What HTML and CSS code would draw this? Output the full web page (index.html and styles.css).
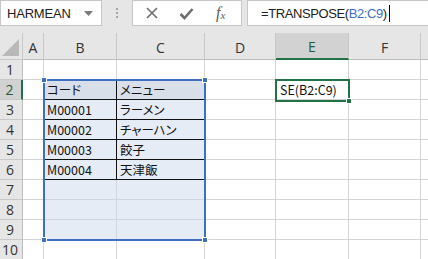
FILE: index.html
```html
<!DOCTYPE html>
<html>
<head>
<meta charset="utf-8">
<link rel="stylesheet" href="styles.css">
</head>
<body>
<div class="app">
  <div class="toolbar">
    <div class="namebox">
      <span class="name">HARMEAN</span>
      <svg class="caret" width="9" height="5" viewBox="0 0 9 5"><path d="M0 0 H9 L4.5 5 Z" fill="#7a7a7a"/></svg>
    </div>
    <div class="dots"><i></i><i></i><i></i></div>
    <div class="fbuttons">
      <svg class="btn" width="14" height="14" viewBox="0 0 14 14"><path d="M2 2 L12 12 M12 2 L2 12" stroke="#6e6e6e" stroke-width="1.6"/></svg>
      <svg class="btn" width="15" height="13" viewBox="0 0 15 13"><path d="M1.5 7 L5.5 11 L13.5 2" stroke="#6e6e6e" stroke-width="2.6" fill="none"/></svg>
      <span class="fx">f<sub>x</sub></span>
    </div>
    <div class="formula"><span>=TRANSPOSE(</span><span class="ref">B2:C9</span><span>)</span><span class="cursor"></span></div>
  </div>
  <div class="sheet">
    <div class="grid">
      <div class="corner"><svg width="17" height="17" viewBox="0 0 17 17"><path d="M17 0 V17 H0 Z" fill="#b9b9b9"/></svg></div>
      <div class="ch">A</div><div class="ch">B</div><div class="ch">C</div><div class="ch">D</div><div class="ch sel">E</div><div class="ch">F</div><div class="ch"></div>

      <div class="rh">1</div><div class="c"></div><div class="c"></div><div class="c"></div><div class="c"></div><div class="c"></div><div class="c"></div><div class="c"></div>

      <div class="rh sel">2</div><div class="c"></div><div class="c hd tb vb">コード</div><div class="c hd tb">メニュー</div><div class="c"></div><div class="c active">SE(B2:C9)</div><div class="c"></div><div class="c"></div>

      <div class="rh">3</div><div class="c"></div><div class="c rg tb vb">M00001</div><div class="c rg tb">ラーメン</div><div class="c"></div><div class="c"></div><div class="c"></div><div class="c"></div>

      <div class="rh">4</div><div class="c"></div><div class="c rg tb vb">M00002</div><div class="c rg tb">チャーハン</div><div class="c"></div><div class="c"></div><div class="c"></div><div class="c"></div>

      <div class="rh">5</div><div class="c"></div><div class="c rg tb vb">M00003</div><div class="c rg tb">餃子</div><div class="c"></div><div class="c"></div><div class="c"></div><div class="c"></div>

      <div class="rh">6</div><div class="c"></div><div class="c rg tb vb">M00004</div><div class="c rg tb">天津飯</div><div class="c"></div><div class="c"></div><div class="c"></div><div class="c"></div>

      <div class="rh">7</div><div class="c"></div><div class="c rg"></div><div class="c rg"></div><div class="c"></div><div class="c"></div><div class="c"></div><div class="c"></div>

      <div class="rh">8</div><div class="c"></div><div class="c rg"></div><div class="c rg"></div><div class="c"></div><div class="c"></div><div class="c"></div><div class="c"></div>

      <div class="rh">9</div><div class="c"></div><div class="c rg"></div><div class="c rg"></div><div class="c"></div><div class="c"></div><div class="c"></div><div class="c"></div>

      <div class="rh">10</div><div class="c"></div><div class="c"></div><div class="c"></div><div class="c"></div><div class="c"></div><div class="c"></div><div class="c"></div>
    </div>
    <div class="refbox">
      <span class="h tl"></span><span class="h tr"></span><span class="h bl"></span><span class="h br"></span>
    </div>
    <div class="activebox"><span class="fill"></span></div>
  </div>
</div>
</body>
</html>
```
FILE: styles.css
```css
* { box-sizing: border-box; }
html, body { margin: 0; padding: 0; }
body {
  width: 428px;
  height: 259px;
  overflow: hidden;
  background: #e6e6e6;
  font-family: "Noto Sans CJK JP", "Liberation Sans", sans-serif;
}
.app { width: 428px; }

.toolbar {
  height: 33px;
  display: flex;
  align-items: flex-start;
  background: #e6e6e6;
}
.namebox {
  width: 102px;
  height: 26px;
  background: #fff;
  border: 1px solid #c6c6c6;
  display: flex;
  align-items: center;
  justify-content: space-between;
  padding: 0 8px 0 6px;
}
.name {
  font-family: "Liberation Sans", sans-serif;
  font-size: 13px;
  color: #222;
  letter-spacing: -0.2px;
}
.caret { margin-top: 1px; }
.dots {
  width: 30px;
  height: 26px;
  display: flex;
  flex-direction: column;
  align-items: center;
  justify-content: center;
  gap: 2px;
}
.dots i {
  display: block;
  width: 2px;
  height: 2px;
  background: #a6a6a6;
}
.fbuttons {
  width: 110px;
  height: 26px;
  background: #fff;
  border: 1px solid #c6c6c6;
  display: flex;
  align-items: center;
  padding-left: 12px;
  gap: 0;
}
.fbuttons .btn:first-child { margin-right: 20px; }
.fbuttons .btn:nth-child(2) { margin-right: 22px; }
.fx {
  font-family: "Liberation Serif", serif;
  font-style: italic;
  font-size: 16px;
  color: #5e5e5e;
  line-height: 1;
}
.fx sub { font-size: 11px; vertical-align: -1px; margin-left: 0; }
.formula {
  flex: 1;
  margin-left: 5px;
  height: 26px;
  background: #fff;
  border: 1px solid #c6c6c6;
  border-right: none;
  display: flex;
  align-items: center;
  padding-left: 13px;
  font-family: "Liberation Sans", sans-serif;
  font-size: 13px;
  letter-spacing: -0.4px;
  color: #222;
}
.formula .ref { color: #3c6fc4; }
.cursor {
  display: inline-block;
  width: 1px;
  height: 17px;
  background: #000;
  margin-left: 2px;
}

.sheet {
  position: relative;
  background: #fff;
}
.grid {
  display: grid;
  grid-template-columns: 23px 21px 73px 88px 71px 73px 72px 20px;
  grid-template-rows: 27px repeat(10, 20px);
}
.corner {
  background: #e6e6e6;
  border-right: 1px solid #c8c8c8;
  border-bottom: 1px solid #c8c8c8;
  display: flex;
  align-items: flex-end;
  justify-content: flex-end;
  padding: 0 3px 3px 0;
}
.ch {
  background: #e6e6e6;
  border-right: 1px solid #c8c8c8;
  border-bottom: 1px solid #bdbdbd;
  display: flex;
  align-items: center;
  justify-content: center;
  font-family: "Open Sans", "Liberation Sans", sans-serif;
  font-size: 14px;
  color: #333;
  padding-top: 2px;
}
.ch.sel {
  background: #d2d2d2;
  border-bottom: 2px solid #217346;
  color: #1e5d36;
}
.rh {
  background: #e6e6e6;
  border-right: 1px solid #bdbdbd;
  border-bottom: 1px solid #c8c8c8;
  display: flex;
  align-items: center;
  justify-content: center;
  font-family: "Open Sans", "Liberation Sans", sans-serif;
  font-size: 14px;
  color: #333;
  padding-right: 2px;
}
.rh.sel {
  background: #d2d2d2;
  border-right: 2px solid #217346;
  color: #1e5d36;
}
.c {
  border-right: 1px solid #d4d4d4;
  border-bottom: 1px solid #d4d4d4;
  font-size: 12.5px;
  font-feature-settings: "palt";
  color: #111;
  display: flex;
  align-items: center;
  padding-left: 3px;
  white-space: nowrap;
  overflow: hidden;
}
.c.hd { background: #d9dfe9; }
.c.rg { background: #e6ecf6; border-right-color: #cfd5de; border-bottom-color: #cfd5de; }
.c.tb { border-bottom: 1px solid #111; }
.c.vb { border-right: 1px solid #111; }
.c.active { padding-left: 4px; font-size: 12.5px; }

.refbox {
  position: absolute;
  left: 43px;
  top: 46px;
  width: 163px;
  height: 162px;
  border: 2px solid #3f6fc1;
  pointer-events: none;
}
.refbox .h {
  position: absolute;
  width: 6px;
  height: 6px;
  background: #3f6fc1;
  border: 1px solid #fff;
}
.refbox .tl { left: -4px; top: -4px; }
.refbox .tr { right: -4px; top: -4px; }
.refbox .bl { left: -4px; bottom: -4px; }
.refbox .br { right: -4px; bottom: -4px; }

.activebox {
  position: absolute;
  left: 275px;
  top: 46px;
  width: 75px;
  height: 23px;
  border: 2px solid #217346;
}
.activebox .fill {
  position: absolute;
  right: -4px;
  bottom: -4px;
  width: 6px;
  height: 6px;
  background: #217346;
  border: 1px solid #fff;
}
```
